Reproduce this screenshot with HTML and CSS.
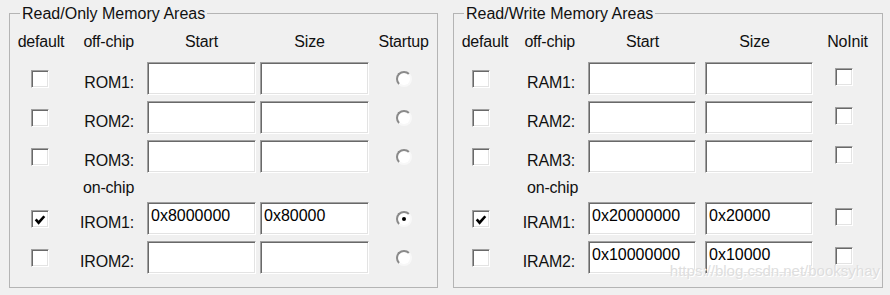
FILE: index.html
```html
<!DOCTYPE html>
<html lang="en">
<head>
    <meta charset="UTF-8">
    <title>Memory Areas</title>
    <link rel="stylesheet" href="styles.css">
</head>
<body>
    <div class="dialog">
        <fieldset class="group group-rom">
            <legend>Read/Only Memory Areas</legend>
            <div class="grid">
                <div class="head">default</div>
                <div class="head head-name">off-chip</div>
                <div class="head head-field">Start</div>
                <div class="head head-field head-size">Size</div>
                <div class="head">Startup</div>

                <span class="check"></span>
                <div class="name">ROM1:</div>
                <div class="field"></div>
                <div class="field"></div>
                <span class="radio"></span>

                <span class="check"></span>
                <div class="name">ROM2:</div>
                <div class="field"></div>
                <div class="field"></div>
                <span class="radio"></span>

                <span class="check"></span>
                <div class="name">ROM3:</div>
                <div class="field"></div>
                <div class="field"></div>
                <span class="radio"></span>

                <div class="sub">on-chip</div>

                <span class="check checked"><svg viewBox="0 0 13 13"><path d="M2.5 6 L5.2 9 L10.5 3"/></svg></span>
                <div class="name">IROM1:</div>
                <div class="field">0x8000000</div>
                <div class="field">0x80000</div>
                <span class="radio selected"></span>

                <span class="check"></span>
                <div class="name">IROM2:</div>
                <div class="field"></div>
                <div class="field"></div>
                <span class="radio"></span>
            </div>
        </fieldset>

        <fieldset class="group group-ram">
            <legend>Read/Write Memory Areas</legend>
            <div class="grid">
                <div class="head">default</div>
                <div class="head head-name">off-chip</div>
                <div class="head head-field">Start</div>
                <div class="head head-field head-size">Size</div>
                <div class="head">NoInit</div>

                <span class="check"></span>
                <div class="name">RAM1:</div>
                <div class="field"></div>
                <div class="field"></div>
                <span class="check noinit"></span>

                <span class="check"></span>
                <div class="name">RAM2:</div>
                <div class="field"></div>
                <div class="field"></div>
                <span class="check noinit"></span>

                <span class="check"></span>
                <div class="name">RAM3:</div>
                <div class="field"></div>
                <div class="field"></div>
                <span class="check noinit"></span>

                <div class="sub">on-chip</div>

                <span class="check checked"><svg viewBox="0 0 13 13"><path d="M2.5 6 L5.2 9 L10.5 3"/></svg></span>
                <div class="name">IRAM1:</div>
                <div class="field">0x20000000</div>
                <div class="field">0x20000</div>
                <span class="check noinit"></span>

                <span class="check"></span>
                <div class="name">IRAM2:</div>
                <div class="field">0x10000000</div>
                <div class="field">0x10000</div>
                <span class="check noinit"></span>
            </div>
        </fieldset>

        <div class="watermark">https://blog.csdn.net/booksyhay</div>
    </div>
</body>
</html>
```

FILE: styles.css
```css
body {
    margin: 0;
    background: #f0f0f0;
    font-family: 'Liberation Sans', Arial, sans-serif;
    font-size: 16px;
    color: #111;
}
.dialog {
    position: relative;
    display: flex;
    gap: 15px;
    padding: 4px 0 0 9px;
}
.group {
    margin: 0;
    padding: 0 0 13px;
    border: 1px solid #b4b4b4;
    min-width: 0;
}
.group-rom {
    width: 427px;
}
.group-ram {
    width: 428px;
}
.group legend {
    margin-left: 10px;
    padding: 0 2px;
    line-height: 19px;
}
.grid {
    display: grid;
    grid-template-rows: 24px repeat(3, 33px) 17px repeat(2, 33px);
    row-gap: 6px;
    padding-top: 9px;
    letter-spacing: -0.2px;
}
.group-rom .grid {
    grid-template-columns: 62px 75px 113px 110px 1fr;
}
.group-ram .grid {
    grid-template-columns: 62px 72px 117px 108px 1fr;
}
.head {
    line-height: 19px;
    text-align: center;
    align-self: start;
}
.head-name {
    text-align: right;
    padding-right: 13px;
}
.head-field {
    width: 109px;
}
.head-size {
    padding-right: 10px;
    box-sizing: border-box;
}
.name {
    text-align: right;
    padding-right: 13px;
    line-height: 19px;
    padding-top: 11px;
}
.sub {
    grid-column: 2 / -1;
    line-height: 17px;
    padding-left: 11px;
}
.field {
    width: 109px;
    box-sizing: border-box;
    border: 1px solid;
    border-color: #a0a0a0 #fff #fff #a0a0a0;
    box-shadow: inset 1px 1px #696969, inset -1px -1px #e3e3e3;
    background: #fff;
    padding: 3px 0 0 3px;
    line-height: 19px;
    color: #000;
    letter-spacing: 0;
}
.group-ram .field {
    width: 108px;
}
.check {
    width: 18px;
    height: 18px;
    box-sizing: border-box;
    border: 1px solid;
    border-color: #a0a0a0 #fff #fff #a0a0a0;
    box-shadow: inset 1px 1px #696969, inset -1px -1px #e3e3e3;
    background: #fff;
    justify-self: start;
    align-self: start;
    margin: 8px 0 0 31px;
    margin-left: 21px;
}
.group-ram .check {
    margin-left: 18px;
}
.group-ram .check.noinit {
    margin: 6px 0 0 22px;
}
.check svg {
    display: block;
    width: 14px;
    height: 14px;
    margin: 2px 1px;
}
.check path {
    fill: none;
    stroke: #000;
    stroke-width: 2.4;
}
.radio {
    width: 16px;
    height: 16px;
    box-sizing: border-box;
    border-radius: 50%;
    border: 2px solid;
    border-color: #8a8a8a #f8f8f8 #f8f8f8 #8a8a8a;
    background: #fff;
    justify-self: start;
    align-self: start;
    margin: 9px 0 0 26px;
    display: flex;
    align-items: center;
    justify-content: center;
}
.radio.selected::after {
    content: "";
    width: 4px;
    height: 4px;
    border-radius: 50%;
    background: #000;
}
.watermark {
    position: absolute;
    right: 10px;
    bottom: 9px;
    font-size: 15px;
    color: #dedede;
    text-shadow: 1px 1px 0 #fff;
}
```
